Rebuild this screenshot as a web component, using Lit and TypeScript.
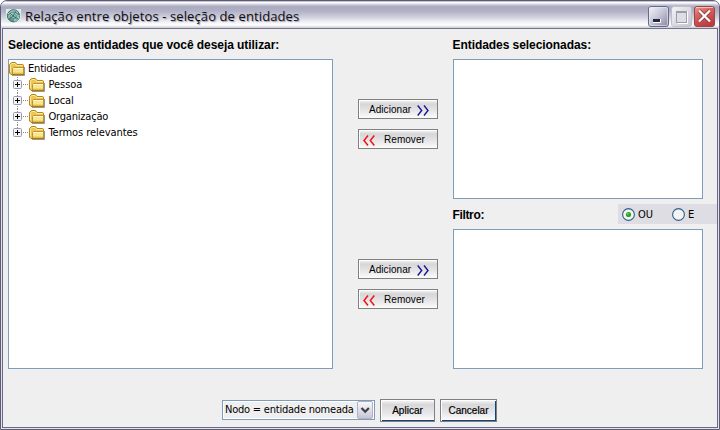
import { LitElement, html, css, svg } from "lit";
import { customElement, property } from "lit/decorators.js";

const folder = html`<svg class="folder" width="16" height="16" viewBox="0 0 16 16">
  <path d="M3 14.500h12.500V6" fill="none" stroke="#9a988c"/>
  <path d="M.5 3.500l2-2h4l1.500 2h5.500q1 0 1 1v9h-12.500l-1.500-1.500z" fill="#eec552" stroke="#b6861c"/>
  <path d="M1.500 11V4.200L3 2.500h3l1.500 2h6" fill="none" stroke="#fbe9a0"/>
  <path d="M3.500 13V7.500l1-1h10v6.500z" fill="#fce48a" stroke="#bf942b"/>
  <path d="M4.500 7.500h9.500" stroke="#fffbd8"/>
  <path d="M4 11.500h10" stroke="#f5d568"/><path d="M2.500 13.500h12.500" stroke="#a97a14"/>
</svg>`;

@customElement("tree-view")
class TreeView extends LitElement {
  @property({ attribute: false }) items: [string, number][] = [];
  static styles = css`
    :host { display: block; padding-top: 1px; font: 11px "DejaVu Sans Condensed", "DejaVu Sans", sans-serif; color: #000; }
    .row { display: flex; height: 16px; align-items: center; white-space: nowrap; }
    .row span { margin-left: 3px; line-height: 16px; }
    .row + .row span { margin-left: 3.5px; }
    svg { flex: none; }
  `;
  render() {
    return html`<div class="row">${folder}<span style="letter-spacing:-0.2px">Entidades</span></div>
      ${this.items.map(([name, ls], i) => html`<div class="row">
        <svg width="20" height="16" viewBox="0 0 20 16">
          <path d="M8.500 0v3" stroke="#8c8c8c" stroke-dasharray="1 1"/>
          ${i < this.items.length - 1 ? svg`<path d="M8.500 13v3" stroke="#8c8c8c" stroke-dasharray="1 1"/>` : null}
          <path d="M14 7.500h6" stroke="#8c8c8c" stroke-dasharray="1 1"/>
          <rect x="4.500" y="3.500" width="8" height="8" rx="1" fill="#f4f4f6" stroke="#9a9aac"/>
          <path d="M6 7.500h5M8.500 5v5" stroke="#000"/>
        </svg>${folder}<span style="letter-spacing:${ls}px">${name}</span></div>`)}`;
  }
}

@customElement("move-button")
class MoveButton extends LitElement {
  @property() kind = "add";
  static styles = css`
    :host { display: block; width: 80px; height: 20px; }
    button { display: flex; align-items: center; box-sizing: border-box; width: 80px; height: 20px; margin: 0; padding: 0;
      border: 1px solid #808080; border-radius: 0; box-shadow: inset 1px 1px #fff;
      background: linear-gradient(#f8f8f8, #d6d6d8 22%, #e6e6e8 60%, #fcfcfc); color: #000;
      font: 10px "Liberation Sans", Arial, sans-serif; white-space: nowrap; }
    .add { padding-left: 10px; justify-content: space-between; padding-right: 8px; letter-spacing: 0.05px; }
    .del { padding-left: 4px; gap: 9px; letter-spacing: 0.05px; }
    svg { flex: none; margin-top: 3px; }
  `;
  render() {
    return this.kind === "add"
      ? html`<button class="add"><span>Adicionar</span><svg width="12" height="11" viewBox="0 0 12 11"><path d="M.7.500l4 5-4 5M7 .500l4 5-4 5" fill="none" stroke="#18188c" stroke-width="1.400"/></svg></button>`
      : html`<button class="del"><svg width="12" height="11" viewBox="0 0 12 11"><path d="M5 .500l-4 5 4 5M11.300.500l-4 5 4 5" fill="none" stroke="#f01414" stroke-width="1.500"/></svg><span>Remover</span></button>`;
  }
}

@customElement("app-root")
class AppRoot extends LitElement {
  private items: [string, number][] = [["Pessoa", -0.05], ["Local", -0.1], ["Organização", -0.2], ["Termos relevantes", -0.06]];
  static styles = css`
    :host { display: block; width: 720px; height: 430px; background: #fff; overflow: hidden; }
    * { box-sizing: border-box; }
    .window { width: 720px; height: 430px; border: 1px solid #5d5b73; border-radius: 7px 7px 0 0; background: #e3e3ec; overflow: hidden; display: flex; flex-direction: column; }
    .title { height: 27px; flex: none; display: flex; align-items: center; padding: 3px 4px 0 5px;
      background: linear-gradient(#8a89a3 0, #fff 1px, #f8f8fc 2px, #c3c3d3 4px, #a9a9c0 6px, #b1b1c6 10px, #cfcfdd 16px, #f0f0f5 21px, #fff 24px, #dcdce3 26px, #c9c9d4 27px); }
    .title h1 { margin: -1px 0 0 4px; flex: 1; font: 13px/22px "Open Sans", "Noto Sans", sans-serif; color: #0d0d12; text-shadow: 1px 1px 1px #9a9aae; white-space: nowrap; letter-spacing: 0.11px; }
    .controls { display: flex; gap: 2px; }
    .client { flex: 1; margin: 0 1px 1px; border: 1px solid #69678a; border-top-color: #75728f; background: #efefef; padding-top: 9px; }
    .main { display: flex; height: 332px; padding-left: 5px; }
    .left { width: 325px; }
    .label { height: 21px; margin: 0; font: bold 12px/14px "Liberation Sans", Arial, sans-serif; color: #000; white-space: nowrap; letter-spacing: -0.06px; }
    .box { background: #fff; border: 1px solid #7f9db9; }
    .tree { height: 310px; }
    .middle { width: 80px; margin-left: 25px; padding-top: 61px; }
    move-button { margin-bottom: 10px; }
    .group { height: 160px; }
    .right { width: 264px; margin-left: 15px; }
    .right .box { width: 250px; height: 140px; }
    .right .label { text-indent: -0.5px; }
    .filter { display: flex; height: 30px; justify-content: space-between; }
    .filter .label { padding-top: 9px; letter-spacing: -0.35px; }
    .radios { width: 99px; height: 20px; margin-top: 5px; background: #dedde3; display: flex; align-items: center; padding-left: 4px; font: 11px "DejaVu Sans Condensed", "DejaVu Sans", sans-serif; }
    .radios label { display: flex; align-items: center; gap: 3px; width: 50px; flex: none; letter-spacing: -0.1px; }
    .radios label + label { width: auto; }
    .bottom { display: flex; padding: 29px 0 0 219px; }
    .combo { width: 153px; height: 20px; margin-top: 1px; display: flex; align-items: center; padding-left: 1px; font: 11px/16px "DejaVu Sans Condensed", "DejaVu Sans", sans-serif; white-space: nowrap; }
    .combo span { flex: 1; letter-spacing: -0.22px; background: #efefef; padding-left: 1px; }
    .action { height: 23px; width: 55px; margin: 0 0 0 5px; padding: 0; border: 1px solid #808080; background: linear-gradient(#f9f9f9, #d8d8da 22%, #e8e8ea 65%, #fff); box-shadow: inset 1px 1px #fff, inset 0 -1px #0b4584; color: #000; font: 10px "Liberation Sans", Arial, sans-serif; -webkit-text-stroke: 0.2px #000; }
    .cancel { width: 57px; box-shadow: inset 1px 1px #fff, inset -1px -1px #0b4584; }
  `;
  render() {
    return html`<div class="window">
      <div class="title">
        <svg width="15" height="15" viewBox="0 0 15 15">
          <rect width="15" height="13" fill="#dfeae8"/>
          <circle cx="7.500" cy="6.800" r="6.100" fill="#5f9690" stroke="#376d69"/>
          <path d="M2 5c3-4 8-4 10-1M3 9c-1-4 4-6 7-4s1 6-2 6M5 8c0-3 4-3 4-1s-3 2-3 0M8 12c4 0 5-3 5-6" fill="none" stroke="#b9d8d2"/>
          <path d="M4 4l3 3 5 3M3 10l4-3 3-5" stroke="#285e5b" fill="none" stroke-width=".7"/>
        </svg>
        <h1>Relação entre objetos - seleção de entidades</h1>
        <div class="controls">
          <svg width="21" height="21" viewBox="0 0 21 21"><defs><linearGradient id="m" x2="1" y2="1"><stop stop-color="#f7f7fb"/><stop offset=".5" stop-color="#c4c4d6"/><stop offset="1" stop-color="#8686a5"/></linearGradient></defs>
            <rect x=".5" y=".5" width="20" height="20" rx="2.500" fill="url(#m)" stroke="#5e6d8e"/><rect x="1.500" y="1.500" width="18" height="18" rx="1.500" fill="none" stroke="#e8e8f2" stroke-opacity=".6"/>
            <rect x="5" y="13" width="7" height="3" fill="#26263c"/><path d="M5 16.500h7.500V13" fill="none" stroke="#fff"/></svg>
          <svg width="21" height="21" viewBox="0 0 21 21"><defs><linearGradient id="x" x2="1" y2="1"><stop stop-color="#f4f4f8"/><stop offset="1" stop-color="#c4c4ce"/></linearGradient></defs>
            <rect x=".5" y=".5" width="20" height="20" rx="2.500" fill="url(#x)" stroke="#c0c0ca"/>
            <path d="M6.500 17.500h10v-12" fill="none" stroke="#fff"/><rect x="5.500" y="5.500" width="10" height="11" fill="#dedee6" stroke="#9c9cac"/><path d="M5 6h11" stroke="#9c9cac" stroke-width="2"/></svg>
          <svg width="21" height="21" viewBox="0 0 21 21"><defs><linearGradient id="c" x2=".5" y2="1"><stop stop-color="#eba49b"/><stop offset=".4" stop-color="#db625e"/><stop offset="1" stop-color="#bd3c40"/></linearGradient></defs>
            <rect x=".5" y=".5" width="20" height="20" rx="2.500" fill="url(#c)" stroke="#964650"/><path d="M2 1.500h17" stroke="#f0c8a8"/>
            <path d="M5 4.500l11 11M16 4.500l-11 11" stroke="#7f343a" stroke-width="3.600"/><path d="M5 4.500l11 11M16 4.500l-11 11" stroke="#fff" stroke-width="2.300"/></svg>
        </div>
      </div>
      <div class="client">
        <div class="main">
          <div class="left"><p class="label">Selecione as entidades que você deseja utilizar:</p>
            <div class="box tree"><tree-view .items=${this.items}></tree-view></div></div>
          <div class="middle">${[0, 1].map(() => html`<div class="group"><move-button kind="add"></move-button><move-button kind="remove"></move-button></div>`)}</div>
          <div class="right"><p class="label">Entidades selecionadas:</p><div class="box"></div>
            <div class="filter"><p class="label">Filtro:</p><div class="radios">
              ${["OU", "E"].map((t, i) => html`<label><svg width="13" height="13" viewBox="0 0 13 13"><circle cx="6.500" cy="6.500" r="5.900" fill="#f3f3f1" stroke="#2d5c89" stroke-width="1.100"/>${i === 0 ? svg`<circle cx="6.500" cy="6.500" r="2.600" fill="#28a528"/><circle cx="5.800" cy="5.800" r="1" fill="#73d16d"/>` : null}</svg>${t}</label>`)}
            </div></div>
            <div class="box"></div></div>
        </div>
        <div class="bottom">
          <div class="box combo"><span>Nodo = entidade nomeada</span>
            <svg width="17" height="18" viewBox="0 0 17 18"><defs><linearGradient id="d" x2="0" y2="1"><stop stop-color="#fafafc"/><stop offset="1" stop-color="#c5c5d4"/></linearGradient></defs><rect x=".5" y=".5" width="15" height="17" rx="1.500" fill="url(#d)" stroke="#b1b1c4"/><path d="M4.500 7l3.700 3.700L11.900 7" fill="none" stroke="#3d3d4e" stroke-width="2.200"/></svg></div>
          <button class="action">Aplicar</button><button class="action cancel">Cancelar</button>
        </div>
      </div>
    </div>`;
  }
}
